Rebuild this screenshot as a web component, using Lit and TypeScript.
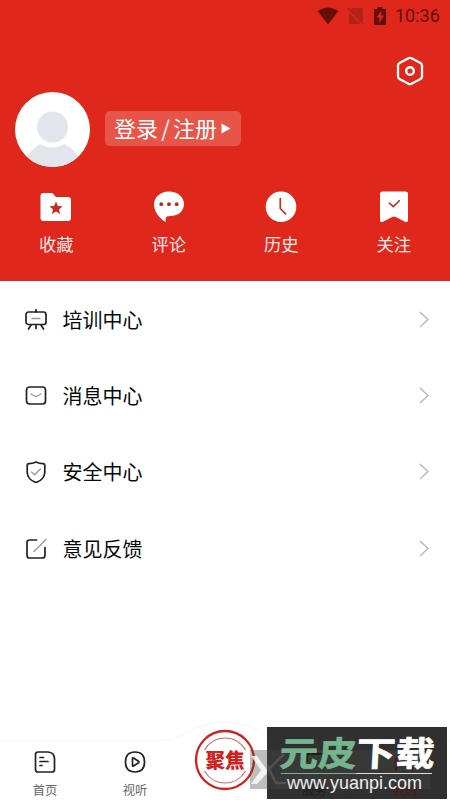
import { LitElement, html, css, svg } from "lit";
import { customElement } from "lit/decorators.js";

const folder = svg`<path d="M3.5 2h8q1.200 0 1.800 1l1.800 2.200q.5.8 1.400.8H28q3 0 3 3v18q0 3-3 3H3.500q-3 0-3-3V5q0-3 3-3Z" fill="#fff"/><path d="m16 10.500 1.900 4.400 4.700.4-3.600 3.100 1.100 4.600-4.100-2.400-4.100 2.400 1.100-4.600-3.600-3.100 4.700-.4Z" fill="#cf2a20"/>`;
const comment = svg`<path d="M16 .5C24.500.5 31 6 31 13c0 7-5.500 12-13.500 12-3 0-4.900.6-4.900 3v3C7 28 1 21 1 13.500 1 6 7.500.5 16 .5Z" fill="#fff"/><g fill="#b92820"><circle cx="8.300" cy="13.200" r="1.900"/><circle cx="16" cy="13.200" r="1.900"/><circle cx="23.700" cy="13.200" r="1.900"/></g>`;
const clock = svg`<circle cx="16" cy="15.800" r="15.300" fill="#fff"/><path d="M15.300 7.500v10l5.200 5.300" stroke="#bf3028" stroke-width="1.700" stroke-linecap="round" fill="none"/>`;
const bookmark = svg`<path d="M4.500.5h23q2.500 0 2.500 2.500v26q0 3-3 1.800L17.800 26q-1.800-1-3.600 0L5 30.800Q2 32 2 29V3Q2 .5 4.500.5Z" fill="#fff"/><path d="m11.300 12 4 3.700 6-6" stroke="#b92820" stroke-width="1.600" stroke-linecap="round" stroke-linejoin="round" fill="none"/>`;

const board = svg`<rect x="1" y="3" width="20" height="12.500" rx="2.500"/><path d="M11 .5V3M6 16l-2.500 4M11 16v3.500M16 16l2.500 4"/><path class="soft" d="M7 9.500h8"/>`;
const mail = svg`<rect x="1.500" y="2" width="19" height="17" rx="3"/><path class="soft" d="m6 9 4 2.200q1 .5 2 0L16 9"/>`;
const shield = svg`<path d="M11 1q3.500 1.500 7 1.700 1.800.1 1.800 1.800V11c0 5-3.700 9-8.800 10.500C5.900 20 2.200 16 2.200 11V4.500q0-1.700 1.800-1.800Q7.500 2.500 11 1Z"/><path class="soft" d="m6.500 11 3.200 2.800L15.400 8"/>`;
const edit = svg`<path d="M11.500 2H4.500Q2 2 2 4.500v12.700Q2 20 4.500 20H17q3 0 3-2.800v-7.700"/><path class="soft" d="M9 13.500 21 1.500"/>`;

@customElement("app-root")
export class AppRoot extends LitElement {
  static styles = css`
    :host {
      display: flex;
      flex-direction: column;
      width: 450px;
      height: 800px;
      position: relative;
      overflow: hidden;
      background: #fff;
      font-family: "Noto Sans CJK SC", "Noto Sans", sans-serif;
    }
    svg { display: block; flex: none; }
    .header { height: 281px; background: #df281b; display: flex; flex-direction: column; color: #fff; }
    .status { height: 31px; display: flex; justify-content: flex-end; align-items: center; padding-right: 10px; box-sizing: border-box; }
    .time { font: 400 18px/31px Roboto, sans-serif; color: #650f0b; width: 45px; margin-left: 8px; white-space: nowrap; }
    .settings { display: flex; justify-content: flex-end; padding: 25px 26px 0 0; }
    .profile { display: flex; align-items: center; gap: 15px; padding: 6px 0 0 15px; height: 75px; }
    .login { width: 136px; height: 35px; border-radius: 5px; background: #e75548; box-sizing: border-box; padding-left: 9px; display: flex; align-items: center; font-size: 22px; line-height: 35px; white-space: nowrap; margin-top: -3px; }
    .login span { margin-top: -2px; }
    .slash { width: 15px; text-align: center; }
    .login svg { margin-left: 4px; }
    .shortcuts { display: grid; grid-template-columns: repeat(4, 1fr); padding-top: 24px; }
    .shortcut { display: flex; flex-direction: column; align-items: center; gap: 8px; font-size: 17.300px; line-height: 26px; color: #ffebe7; }
    .menu { padding-top: 1px; flex: 1; }
    .row { height: 76.200px; display: flex; align-items: center; padding: 0 20px 0 25px; font-size: 20px; color: #080808; }
    .row .label { margin-left: 14.500px; flex: 1; line-height: 30px; }
    .line { fill: none; stroke: #222; stroke-width: 1.700; stroke-linecap: round; stroke-linejoin: round; }
    .soft { stroke: #999; stroke-width: 1.300; }
    .nav { height: 82px; position: relative; display: grid; grid-template-columns: repeat(5, 90px); }
    .edge { position: absolute; left: 0; top: 0; }
    .tab { position: relative; display: flex; flex-direction: column; align-items: center; padding-top: 32px; gap: 5px; font-size: 12.300px; line-height: 22px; color: #666; }
    .focus { position: relative; padding-top: 11px; display: flex; justify-content: center; align-items: flex-start; }
    .focus text { font-size: 20.500px; font-weight: 900; fill: #cf211d; }
    .band { position: absolute; left: 250px; top: 750px; }
    .stamp { position: absolute; left: 267px; top: 727px; }
    .brand { font-size: 34px; font-weight: 700; }
    .url { font-family: "Liberation Sans", Arial, sans-serif; font-size: 18px; fill: #eee; }
    .under { font-size: 12.300px; fill: #1e1e1e; }
  `;

  render() {
    const shortcuts = [[folder, "收藏"], [comment, "评论"], [clock, "历史"], [bookmark, "关注"]];
    const rows = [[board, "培训中心"], [mail, "消息中心"], [shield, "安全中心"], [edit, "意见反馈"]];
    return html`
      <header class="header">
        <div class="status">
          <svg width="70" height="20" viewBox="0 0 70 20">
            <path d="M.5 5Q11-2 21.500 5L11 18.500Z" fill="#650f0b"/>
            <path d="M35 2h10q1 0 1 1v15H32V5Z" fill="#b32218"/>
            <path d="m29.500 2.500 17 16" stroke="#df281b" stroke-width="3"/><path d="m31 2.500 15.500 15.500" stroke="#b32218" stroke-width="1.500"/>
            <path d="M60.500 1h5v2H69v16H57V3h3.500Z" fill="#650f0b"/><path d="m64.500 4.500-5 7h3l-.5 5.500 5-7.500h-3Z" fill="#d62b20"/>
          </svg>
          <div class="time">10:36</div>
        </div>
        <div class="settings">
          <svg width="28" height="30" viewBox="0 0 28 30" fill="none" stroke="#fff" stroke-linejoin="round">
            <path d="M12.500 2.200q1.500-.8 3 0l9 4.900q1.500.8 1.500 2.400v11q0 1.600-1.500 2.400l-9 4.900q-1.500.8-3 0l-9-4.900Q2 22.100 2 20.500v-11q0-1.600 1.500-2.400Z" stroke-width="2.300"/><circle cx="14" cy="15" r="3.800" stroke-width="2.400"/>
          </svg>
        </div>
        <div class="profile">
          <svg width="75" height="75" viewBox="0 0 75 75">
            <defs><clipPath id="face"><circle cx="37.500" cy="37.500" r="37.500"/></clipPath></defs>
            <circle cx="37.500" cy="37.500" r="37.500" fill="#fff"/>
            <g clip-path="url(#face)" fill="#e2e5ec"><circle cx="37.500" cy="35" r="15.500"/><path d="M11 66q6-9 14-14 12.500 7 25 0 9 5 14 14L54 80H20Z"/></g>
          </svg>
          <div class="login"><span>登录</span><span class="slash">/</span><span>注册</span>
            <svg width="10" height="11" viewBox="0 0 10 11"><path d="M.5.500 9.500 5.500.5 10.500Z" fill="#fff"/></svg>
          </div>
        </div>
        <div class="shortcuts">
          ${shortcuts.map(([icon, name]) => html`<div class="shortcut"><svg width="32" height="32" viewBox="0 0 32 32">${icon}</svg><span>${name}</span></div>`)}
        </div>
      </header>
      <main class="menu">
        ${rows.map(([icon, name]) => html`<div class="row">
          <svg class="line" width="23" height="22" viewBox="0 0 23 22">${icon}</svg>
          <span class="label">${name}</span>
          <svg width="12" height="18" viewBox="0 0 12 18" fill="none" stroke="#b5b5b5" stroke-width="1.300"><path d="m2 1 8 7.500L2 16"/></svg>
        </div>`)}
      </main>
      <nav class="nav">
        <svg class="edge" width="450" height="82" viewBox="0 0 450 82"><path d="M0 23H158C185 23 192 4 225 4S265 23 292 23H450" fill="none" stroke="#fafafa" stroke-width="2"/></svg>
        <div class="tab">
          <svg class="line" width="22" height="24" viewBox="0 0 22 24"><path d="M4 2h10q6.500.5 6.500 7V19.500q0 2.500-2.500 2.500H4q-2.500 0-2.500-2.500v-15Q1.500 2 4 2ZM6 7.500h3.500M6 11.500h8M6 15.500h2"/></svg>首页
        </div>
        <div class="tab">
          <svg class="line" width="22" height="24" viewBox="0 0 22 24"><path d="M11 2q9.500 0 9.500 10T11 22 1.500 12 11 2ZM8.500 8.500v7q0 1 1 .5l5-3.300q1-.7 0-1.400l-5-3.300q-1-.5-1 .5Z"/></svg>视听
        </div>
        <div class="focus">
          <svg width="62" height="62" viewBox="0 0 62 62">
            <circle cx="31" cy="31" r="29" fill="#fff" stroke="#cf211d" stroke-width="2.300"/>
            <path d="M10.500 21a23.500 23.500 0 0 1 41 0M10.500 42a23.500 23.500 0 0 0 41 0" fill="none" stroke="#dc6661" stroke-width="1.200"/>
            <text x="31" y="38.500" text-anchor="middle" textLength="39" lengthAdjust="spacingAndGlyphs">聚焦</text>
          </svg>
        </div>
      </nav>
      <svg class="band" width="17" height="39" viewBox="0 0 17 39"><path d="M0 0H17V39H0Z" fill="#444" fill-opacity=".35"/><path d="M1 6h6l10 14v3L7 34H1l10-14Z" fill="#fff" fill-opacity=".8"/></svg>
      <svg class="stamp" width="180" height="72" viewBox="0 0 180 72">
        <rect width="180" height="72" fill="#303030"/>
        <rect y="23" width="163" height="39" fill="#383838"/>
        <path d="m1 43 16-16M0 38l9 18h10" fill="none" stroke="#505050" stroke-width="2.500"/>
        <g class="under"><text x="35" y="68">服务</text><text x="126" y="68" fill="#501719">我的</text></g>
        <path d="M40 35v-8h18v8" fill="none" stroke="#211d1d" stroke-width="2"/><path d="M129 44V31l8-6 8 6v13" fill="none" stroke="#501719" stroke-width="2"/>
        <g class="brand" transform="translate(5 0) skewX(-3)">
          <text x="9" y="38.500" fill="#75b58e" stroke="#75b58e" stroke-width=".7" textLength="77" lengthAdjust="spacingAndGlyphs">元皮</text>
          <text x="86" y="38.500" fill="#fff" stroke="#fff" stroke-width=".7" textLength="78" lengthAdjust="spacingAndGlyphs">下载</text>
        </g>
        <path d="M14 46.500h75" stroke="#75b58e"/><path d="M89 46.500h76" stroke="#ddd"/>
        <text class="url" x="20" y="62" textLength="135" lengthAdjust="spacingAndGlyphs">www.yuanpi.com</text>
      </svg>
      `;
  }
}
